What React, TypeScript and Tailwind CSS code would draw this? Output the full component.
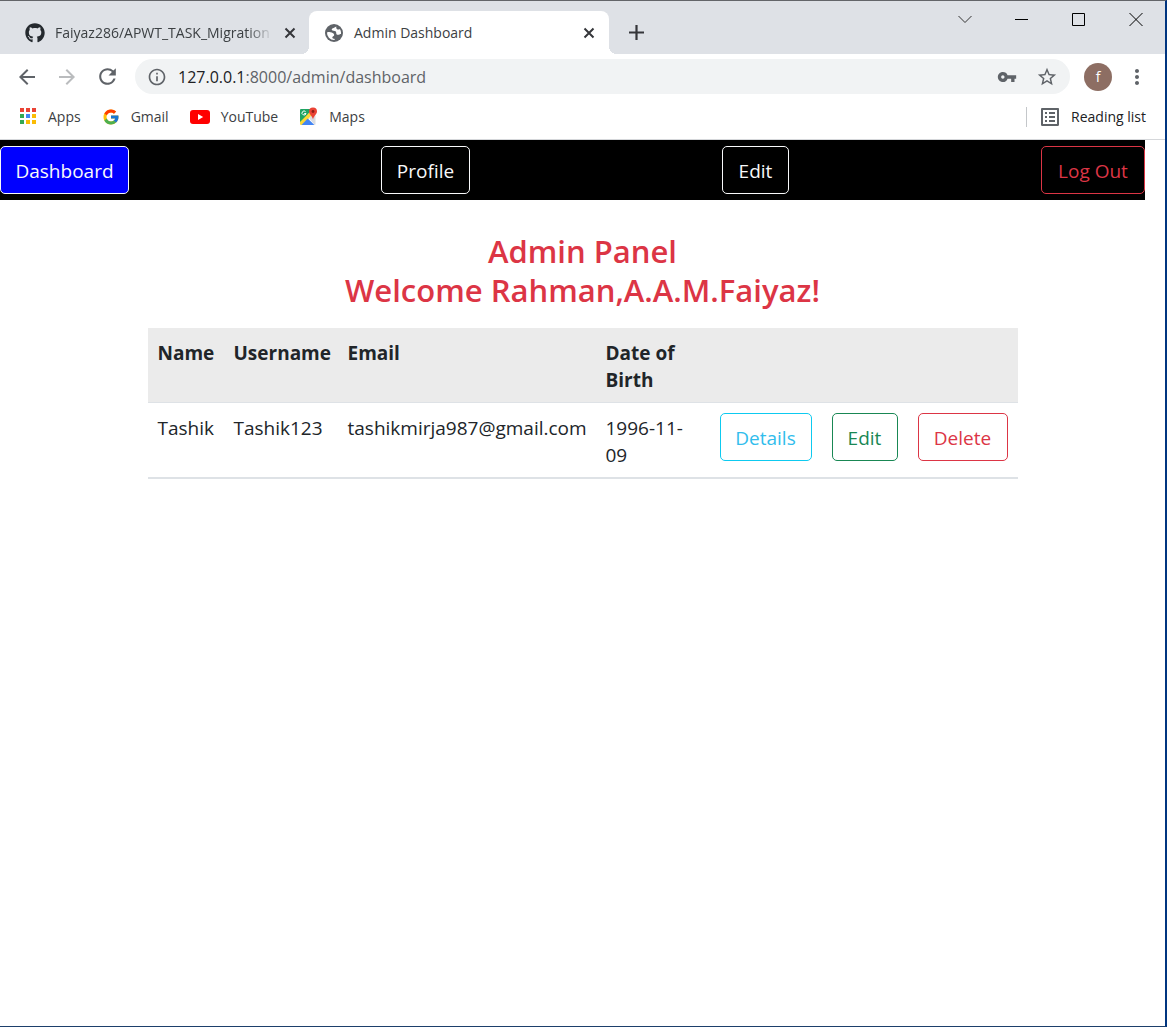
import type { ReactNode } from "react";
import { FaGithub } from "react-icons/fa";
import { FcGoogle } from "react-icons/fc";
import {
  MdArrowBack,
  MdArrowForward,
  MdInfoOutline,
  MdListAlt,
  MdMoreVert,
  MdRefresh,
  MdStarBorder,
  MdVpnKey,
} from "react-icons/md";

function CloseGlyph() {
  return (
    <svg width="12" height="12" viewBox="0 0 12 12" stroke="#35363a" strokeWidth="2" fill="none">
      <path d="M1.5 1.5 10.5 10.5M10.5 1.5 1.5 10.5" />
    </svg>
  );
}

function GlobeIcon() {
  return (
    <svg width="18" height="18" viewBox="0 0 18 18">
      <circle cx="9" cy="9" r="9" fill="#5f6368" />
      <path d="M2 8.500c1.600-.6 3.300-.5 4.700.1 1.500.7 2.500 1.300 2.500 2.400 0 1-1.900 1.400-1.900 2.500 0 .8.9 1.300 2.700 1.500-.3.600-.6.900-1 .9A7 7 0 0 1 2 8.500z" fill="#fff" />
      <path
        d="M11.300 2.400C9.800 3.700 7 3.900 6.700 5.300c-.2 1.200 1.500 1.500 3 1.700 1.400.2 1.500 1 1.500 2 0 1.400 1 2 2.200 1.800 1.200-.2 1.600-.9 2.600-.9.2-2-.3-3.600-1.200-4.900-.6.6-1.500.8-2.300.4-.9-.5-1.500-1.300-1.200-3z"
        fill="#fff"
      />
    </svg>
  );
}

function AppsIcon() {
  const colors = ["#ea4335", "#ea4335", "#ea4335", "#34a853", "#4285f4", "#fbbc04", "#34a853", "#fbbc04", "#fbbc04"];
  return (
    <svg width="17" height="17" viewBox="0 0 17 17">
      {colors.map((c, i) => (
        <rect key={i} x={(i % 3) * 6} y={Math.floor(i / 3) * 6} width="4" height="4" fill={c} />
      ))}
    </svg>
  );
}

function YouTubeIcon() {
  return (
    <svg width="20" height="14" viewBox="0 0 20 14">
      <rect width="20" height="14" rx="3" fill="#f00" />
      <path d="M8 4l5.200 3L8 10z" fill="#fff" />
    </svg>
  );
}

function MapsIcon() {
  return (
    <svg width="19" height="19" viewBox="0 0 19 19">
      <path d="M2 2h11L3 15.500 1 17V3a1 1 0 0 1 1-1z" fill="#1fa463" />
      <path d="M1 15 13 3l2 3L3.500 18H2a1 1 0 0 1-1-1z" fill="#fdd835" />
      <path d="M2.500 18 8.700 11.500 15.500 18z" fill="#4285f4" />
      <path d="M10 11 14 7.500l2.500 1V17a1 1 0 0 1-1 1z" fill="#dadce0" />
      <path d="M6.600 4.700A2 2 0 1 0 7 6.500H5.200" fill="none" stroke="#fff" strokeWidth="1" />
      <path d="M14 .5a4 4 0 0 1 4 4c0 2.800-3.200 4-4 8-.8-4-4-5.200-4-8a4 4 0 0 1 4-4z" fill="#ea4335" />
      <circle cx="14" cy="4.500" r="1.400" fill="#8c1d14" />
    </svg>
  );
}

function Bookmark({ icon, label }: { icon: ReactNode; label: string }) {
  return (
    <a href="#" className="flex items-center gap-[11px]">
      {icon}
      <span>{label}</span>
    </a>
  );
}

function TabStrip() {
  return (
    <div className="flex h-[53px] bg-[#dee1e6] text-[#3c4043]">
      <div className="flex min-w-0 flex-1 pt-[10px]">
        <div className="flex w-[309px] shrink-0 items-center rounded-br-lg pr-[13px] pl-[25px]">
          <FaGithub size={20} className="shrink-0 text-[#24292e]" />
          <span className="ml-[10px] flex-1 overflow-hidden text-sm whitespace-nowrap [mask-image:linear-gradient(to_right,black_88%,transparent)]">
            Faiyaz286/APWT_TASK_Migration
          </span>
          <button aria-label="Close tab" className="ml-[11px]">
            <CloseGlyph />
          </button>
        </div>
        <div className="relative flex w-[300px] shrink-0 items-center rounded-t-lg bg-white pr-[14px] pl-4">
          <span className="absolute bottom-0 -left-2 size-2 bg-[radial-gradient(circle_at_0_0,#dee1e6_8px,white_8px)]" />
          <span className="absolute -right-2 bottom-0 size-2 bg-[radial-gradient(circle_at_100%_0,#dee1e6_8px,white_8px)]" />
          <GlobeIcon />
          <span className="ml-[11px] flex-1 text-sm">Admin Dashboard</span>
          <button aria-label="Close tab">
            <CloseGlyph />
          </button>
        </div>
        <button aria-label="New tab" className="ml-5 self-center">
          <svg width="15" height="15" viewBox="0 0 15 15" stroke="#35363a" strokeWidth="2.200">
            <path d="M7.500 0v15M0 7.500h15" />
          </svg>
        </button>
      </div>
      <div className="flex h-9 items-center gap-[43px] pr-[22px]">
        <button aria-label="Search tabs">
          <svg width="14" height="14" viewBox="0 0 14 14" fill="none" stroke="#333">
            <path d="M.5 4 7 10.500 13.500 4" />
          </svg>
        </button>
        <button aria-label="Minimize">
          <svg width="14" height="14" viewBox="0 0 14 14" stroke="#000">
            <path d="M0 7.500h13" />
          </svg>
        </button>
        <button aria-label="Maximize">
          <svg width="14" height="14" viewBox="0 0 14 14" fill="none" stroke="#000">
            <path d="M.5 1.500h12v12H.5z" />
          </svg>
        </button>
        <button aria-label="Close window">
          <svg width="14" height="14" viewBox="0 0 14 14" stroke="#000">
            <path d="M.5 1l13 13M13.500 1l-13 13" />
          </svg>
        </button>
      </div>
    </div>
  );
}

function Toolbar() {
  return (
    <div className="flex h-[45px] items-center pr-4 pl-[15px] text-[#5f6368]">
      <div className="flex items-center gap-4">
        <button aria-label="Back"><MdArrowBack size={24} /></button>
        <button aria-label="Forward" className="text-[#babcbe]"><MdArrowForward size={24} /></button>
        <button aria-label="Reload"><MdRefresh size={25} /></button>
      </div>
      <div className="ml-[15px] flex h-[35px] flex-1 items-center rounded-full bg-[#f1f3f4] pr-3 pl-3">
        <MdInfoOutline size={20} />
        <a href="#" className="ml-[11px] flex-1 text-base">
          <span className="text-[#202124]">127.0.0.1</span>:8000/admin/dashboard
        </a>
        <button aria-label="Saved passwords" className="mr-[19px]"><MdVpnKey size={20} /></button>
        <button aria-label="Bookmark this page"><MdStarBorder size={22} /></button>
      </div>
      <button aria-label="Account" className="ml-[14px] flex size-7 items-center justify-center rounded-full bg-[#8d6e63] text-sm text-white">
        f
      </button>
      <button aria-label="Menu" className="ml-[13px]"><MdMoreVert size={24} /></button>
    </div>
  );
}

function BookmarksBar() {
  return (
    <div className="flex h-[41px] items-center justify-between border-b border-[#d5d7da] pr-[19px] pb-[5px] pl-5 text-sm text-[#3c4043]">
      <nav aria-label="Bookmarks" className="flex items-center gap-[21px]">
        <Bookmark icon={<AppsIcon />} label="Apps" />
        <Bookmark icon={<FcGoogle size={18} />} label="Gmail" />
        <Bookmark icon={<YouTubeIcon />} label="YouTube" />
        <Bookmark icon={<MapsIcon />} label="Maps" />
      </nav>
      <div className="flex h-5 items-center border-l border-[#c4c7ca] pl-[11px] text-[#202124]">
        <button className="flex items-center gap-[9px]">
          <MdListAlt size={24} className="text-[#5f6368]" />
          Reading list
        </button>
      </div>
    </div>
  );
}

const BUTTON = "inline-flex h-12 items-center justify-center rounded-[5px] border pt-0.5";

export default function App() {
  return (
    <div className="min-h-screen border-t border-r-2 border-b border-t-[#636569] border-r-[#003580] border-b-[#1d3f6b] bg-white font-['Open_Sans',sans-serif]">
      <TabStrip />
      <Toolbar />
      <BookmarksBar />
      <nav aria-label="Admin" className="mr-5 flex h-[60px] items-center justify-between bg-black text-[19px] text-[#f8f9fa]">
        <a href="#" className={`${BUTTON} w-[129px] border-[#f8f9fa] bg-[#0000ff]`}>Dashboard</a>
        <a href="#" className={`${BUTTON} w-[89px] border-[#f8f9fa]`}>Profile</a>
        <a href="#" className={`${BUTTON} w-[67px] border-[#f8f9fa]`}>Edit</a>
        <a href="#" className={`${BUTTON} w-[104px] border-[#dc3545] text-[#dc3545]`}>Log Out</a>
      </nav>
      <main className="mx-auto max-w-[870px] pt-8 text-[19px] leading-[27px] text-[#212529]">
        <h1 className="mb-[18px] text-center text-[31px] leading-[39px] font-semibold text-[#dc3545]">
          Admin Panel
          <br />
          Welcome Rahman,A.A.M.Faiyaz!
        </h1>
        <table className="w-full table-fixed border-b-2 border-[#dee2e6] text-left align-top">
          <colgroup>
            <col className="w-[76px]" />
            <col className="w-[114px]" />
            <col className="w-[258px]" />
            <col className="w-[114px]" />
            <col className="w-[112px]" />
            <col className="w-[86px]" />
            <col className="w-[110px]" />
          </colgroup>
          <thead>
            <tr className="border-b border-[#dee2e6] bg-[#ebebeb] align-top">
              <th className="px-[10px] pt-3 pb-2">Name</th>
              <th className="px-[10px] pt-3 pb-2">Username</th>
              <th className="px-[10px] pt-3 pb-2">Email</th>
              <th className="px-[10px] pt-3 pb-2">Date of Birth</th>
              <td colSpan={3} />
            </tr>
          </thead>
          <tbody>
            <tr className="align-top">
              <td className="px-[10px] pt-3 pb-2">Tashik</td>
              <td className="px-[10px] pt-3 pb-2">Tashik123</td>
              <td className="px-[10px] pt-3 pb-2">tashikmirja987@gmail.com</td>
              <td className="px-[10px] pt-3 pb-2">1996-11-09</td>
              <td className="px-[10px] pt-[10px]">
                <a href="#" className={`${BUTTON} w-full border-[#0dcaf0] text-[#31bdec]`}>Details</a>
              </td>
              <td className="px-[10px] pt-[10px]">
                <a href="#" className={`${BUTTON} w-full border-[#198754] text-[#198754]`}>Edit</a>
              </td>
              <td className="px-[10px] pt-[10px]">
                <a href="#" className={`${BUTTON} w-full border-[#dc3545] text-[#dc3545]`}>Delete</a>
              </td>
            </tr>
          </tbody>
        </table>
      </main>
    </div>
  );
}
